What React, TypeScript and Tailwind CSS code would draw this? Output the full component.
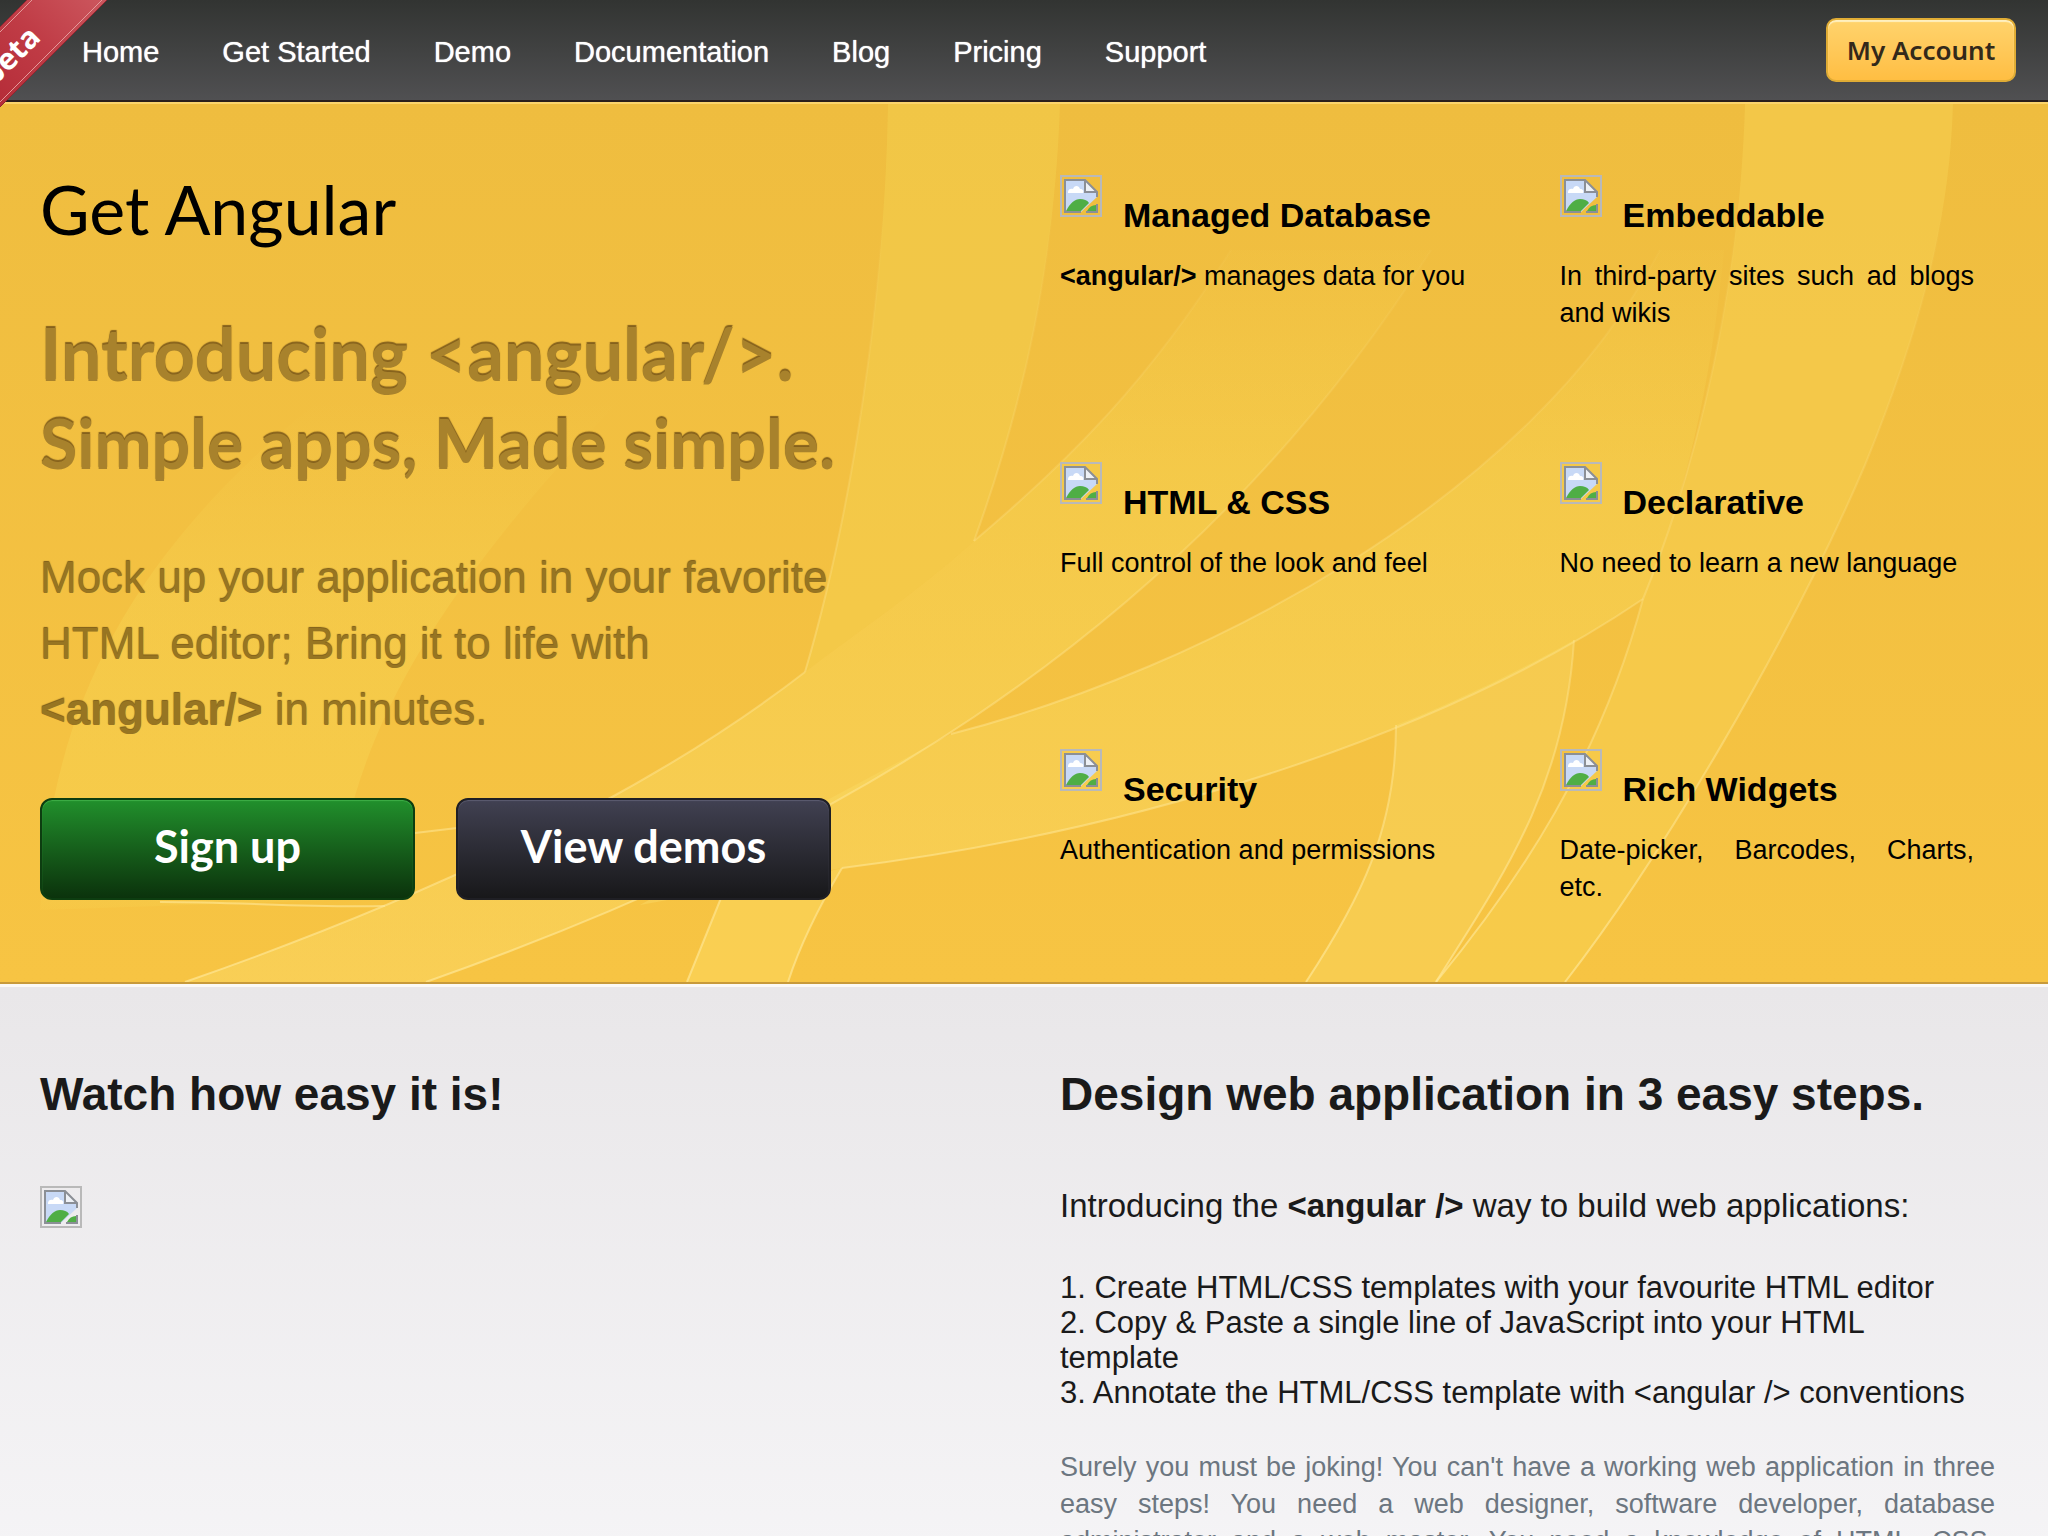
import React from "react";

type Feature = {
  title: string;
  body: React.ReactNode;
};

const navItems = ["Home", "Get Started", "Demo", "Documentation", "Blog", "Pricing", "Support"];

const features: Feature[] = [
  { title: "Managed Database", body: <><b>&lt;angular/&gt;</b> manages data for you</> },
  { title: "Embeddable", body: "In third-party sites such ad blogs and wikis" },
  { title: "HTML & CSS", body: "Full control of the look and feel" },
  { title: "Declarative", body: "No need to learn a new language" },
  { title: "Security", body: "Authentication and permissions" },
  { title: "Rich Widgets", body: "Date-picker, Barcodes, Charts, etc." },
];

const steps = [
  "1. Create HTML/CSS templates with your favourite HTML editor",
  "2. Copy & Paste a single line of JavaScript into your HTML template",
  "3. Annotate the HTML/CSS template with <angular /> conventions",
];

function MissingImage() {
  return (
    <svg viewBox="0 0 42 42" className="size-[42px] shrink-0" aria-hidden="true">
      <rect x="1" y="1" width="40" height="40" fill="none" stroke="#b9b9b9" strokeWidth="2" />
      <path d="M5 5h20l12 12v5L21 37H5z" fill="#c8d9f6" />
      <path d="M8 17c0-3 3-4 5-3 1-4 6-4 7 0 3 0 4 2 3 4H8z" fill="#fff" />
      <path d="M6 36c4-8 9-12 14-12 4 0 7 1 9 4l-8 8z" fill="#4fae45" />
      <path d="M27 36c2-4 5-6 9-6v6z" fill="#4fae45" />
      <path d="M26 6v10h10z" fill="#eef1f6" />
      <path d="M21 37H5V5h20l12 12v5M25 5v12h12M37 29v8H26" fill="none" stroke="#8b8f96" strokeWidth="2" />
    </svg>
  );
}

function BetaRibbon() {
  return (
    <svg viewBox="0 0 108 108" className="absolute top-0 left-0 z-10 size-[108px]">
      <defs>
        <linearGradient id="ribbon" x1="0" y1="1" x2="1" y2="0">
          <stop offset="0" stopColor="#b52c38" />
          <stop offset="0.5" stopColor="#c03c46" />
          <stop offset="1" stopColor="#cc575e" />
        </linearGradient>
      </defs>
      <path d="M27 0h80L0 107V27z" fill="url(#ribbon)" />
      <path d="M27 0 0 27M107 0 0 107" stroke="#8e2630" strokeWidth="1" />
      <path d="M32 0 0 32M102 0 0 102" stroke="#e39a9a" strokeWidth="1" />
      <text x="-6" y="87" transform="rotate(-45 -6 87)" className="fill-white font-['Noto_Sans',sans-serif] text-[30px] font-bold">
        beta
      </text>
    </svg>
  );
}

function HeroSwirls() {
  return (
    <svg viewBox="0 104 2048 878" preserveAspectRatio="none" className="absolute inset-0 h-full w-full" aria-hidden="true">
      <defs>
        <linearGradient id="fade" gradientUnits="userSpaceOnUse" x1="0" y1="200" x2="0" y2="982">
          <stop offset="0" stopColor="#f8da58" stopOpacity="0" />
          <stop offset="0.35" stopColor="#f8da58" stopOpacity="0.35" />
          <stop offset="1" stopColor="#fbd968" stopOpacity="0.5" />
        </linearGradient>
        <linearGradient id="leftFade" gradientUnits="userSpaceOnUse" x1="0" y1="400" x2="0" y2="960">
          <stop offset="0" stopColor="#f8da58" stopOpacity="0" />
          <stop offset="0.35" stopColor="#f8da58" stopOpacity="0.3" />
          <stop offset="0.8" stopColor="#f8da58" stopOpacity="0.35" />
          <stop offset="1" stopColor="#f8da58" stopOpacity="0" />
        </linearGradient>
        <linearGradient id="line" gradientUnits="userSpaceOnUse" x1="0" y1="200" x2="0" y2="982">
          <stop offset="0" stopColor="#ffe795" stopOpacity="0" />
          <stop offset="0.4" stopColor="#ffe795" stopOpacity="0.25" />
          <stop offset="1" stopColor="#ffe795" stopOpacity="0.7" />
        </linearGradient>
      </defs>
      <path d="M40 910C50 720 120 560 320 400L620 400C430 600 350 740 335 900z" fill="url(#leftFade)" />
      <path d="M888 104C885 300 850 520 805 672 860 630 920 590 974 541 1025 400 1055 260 1060 104z" fill="#f5d452" fillOpacity=".4" />
      <path d="M1745 104C1740 280 1700 460 1643 599 1600 760 1520 880 1436 982H1565C1660 860 1790 640 1865 465 1920 330 1950 220 1953 104z" fill="#f7d556" fillOpacity=".42" />
      <path d="M1231 250C1150 380 1070 460 974 541 920 590 860 630 805 672 640 800 420 900 185 982H426C800 850 1180 650 1431 250z" fill="url(#fade)" />
      <path d="M951 734C1200 670 1530 500 1660 250H1724C1710 400 1680 510 1643 599 1450 730 1150 830 842 868L640 905 831 798z" fill="url(#fade)" />
      <path d="M721 898 687 982H788C800 945 820 905 842 868z" fill="#fbd75e" fillOpacity=".6" />
      <path d="M1396 725C1396 830 1360 900 1306 982H1436C1500 880 1565 790 1574 640 1520 670 1460 700 1396 725z" fill="#f8dc6a" fillOpacity=".35" />
      <g fill="none" stroke="url(#line)" strokeWidth="2">
        <path d="M888 104C885 300 850 520 805 672" />
        <path d="M1060 104C1055 260 1025 400 974 541" />
        <path d="M1231 250C1150 380 1070 460 974 541M805 672C640 800 420 900 185 982" />
        <path d="M426 982C800 850 1180 650 1431 250" />
        <path d="M951 734C1200 670 1530 500 1660 250" />
        <path d="M1643 599C1450 730 1150 830 842 868" />
        <path d="M1745 104C1740 280 1700 460 1643 599 1600 760 1520 880 1436 982" />
        <path d="M1565 982C1660 860 1790 640 1865 465 1920 330 1950 220 1953 104" />
        <path d="M1396 725C1396 830 1360 900 1306 982M1574 640C1565 790 1500 880 1436 982" />
        <path d="M721 898 687 982M842 868C820 905 800 945 788 982" />
        <path d="M160 902C240 902 310 908 385 906M415 833 457 828" />
      </g>
    </svg>
  );
}

function HeaderBar() {
  return (
    <header className="relative flex h-[102px] shrink-0 items-center border-b-2 border-[#2a1f1c] bg-linear-to-b from-[#323432] to-[#505052] pr-8 pl-[82px]">
      <BetaRibbon />
      <nav className="flex gap-[63px] pt-1">
        {navItems.map((item) => (
          <a key={item} href="#" className="text-[29px] leading-[44px] text-white [text-shadow:0_0_1px_#fff]">
            {item}
          </a>
        ))}
      </nav>
      <a
        href="#"
        className="ml-auto flex h-16 w-[190px] items-center justify-center rounded-[10px] border-2 border-[#e0ac35] bg-linear-to-b from-[#ffd36c] to-[#ffbe42] font-['Noto_Sans',sans-serif] text-[26px] font-semibold text-[#33291a] shadow-[inset_0_2px_1px_#fff0c0]"
      >
        My Account
      </a>
    </header>
  );
}

function Hero() {
  return (
    <section className="relative shrink-0 border-t-2 border-b-2 border-t-[#fbd46c] border-b-[#c89a3a] bg-linear-to-b from-[#efbd3f] to-[#f7c443]">
      <HeroSwirls />
      <div className="relative grid min-h-[878px] grid-cols-[1020fr_935fr] pr-[53px] pl-10">
        <div>
          <h1 className="mt-[60px] font-[Lato,sans-serif] text-[68px] leading-[90px]">Get Angular</h1>
          <h2 className="mt-[54px] font-[Lato,sans-serif] leading-[90px] font-bold text-[#a8822c] [text-shadow:0_-2px_1px_#85611c]">
            <span className="block text-[72px]">Introducing &lt;angular/&gt;.</span>
            <span className="block text-[68px]">Simple apps, Made simple.</span>
          </h2>
          <p className="mt-[57px] max-w-[800px] text-[44px] leading-[66px] text-[#977522] [text-shadow:0_-1px_1px_#7a5a18]">
            Mock up your application in your favorite HTML editor; Bring it to life with <b>&lt;angular/&gt;</b> in minutes.
          </p>
          <div className="mt-[55px] flex gap-[41px] font-[Lato,sans-serif] text-[45px] font-bold text-white">
            <button className="h-[102px] w-[375px] rounded-[12px] border-2 border-[#0d3d10] bg-linear-to-b from-[#21902c] to-[#0b330c] pb-1 shadow-[inset_0_1px_1px_#3fae48]">
              Sign up
            </button>
            <button className="h-[102px] w-[375px] rounded-[12px] border-2 border-[#1f1f24] bg-linear-to-b from-[#414152] to-[#18181a] pb-1 shadow-[inset_0_1px_1px_#5c5c70]">
              View demos
            </button>
          </div>
        </div>
        <ul className="mt-[71px] grid auto-rows-[156px] grid-cols-2 content-start gap-x-[85px] gap-y-[131px] pr-[21px]">
          {features.map((feature) => (
            <li key={feature.title}>
              <div className="flex gap-[21px]">
                <MissingImage />
                <h3 className="pt-4 text-[34px] leading-[48px] font-bold">{feature.title}</h3>
              </div>
              <p className="mt-[19px] text-justify text-[27px] leading-[37px]">{feature.body}</p>
            </li>
          ))}
        </ul>
      </div>
    </section>
  );
}

function Details() {
  return (
    <section className="grid grow grid-cols-[1020fr_935fr] border-t-3 border-[#fbf9f6] bg-linear-to-b from-[#e9e7e9] to-[#f5f4f6] pt-[73px] pr-[53px] pl-10 text-[#1a1a1a]">
      <div>
        <h2 className="mb-[57px] text-[46px] leading-[69px] font-bold">Watch how easy it is!</h2>
        <MissingImage />
      </div>
      <div>
        <h2 className="text-[46px] leading-[69px] font-bold">Design web application in 3 easy steps.</h2>
        <p className="mt-[55px] text-[33px] leading-[44px]">
          Introducing the <b>&lt;angular /&gt;</b> way to build web applications:
        </p>
        <ul className="mt-[42px] pr-5 text-[31px] leading-[35px]">
          {steps.map((step) => (
            <li key={step}>{step}</li>
          ))}
        </ul>
        <p className="mt-[39px] text-justify text-[27px] leading-[37px] text-[#6c7680] [text-align-last:justify]">
          Surely you must be joking! You can't have a working web application in three easy steps! You need a web
          designer, software developer, database administrator and a web master. You need a knowledge of HTML, CSS,
        </p>
      </div>
    </section>
  );
}

export default function App() {
  return (
    <div className="flex h-screen flex-col overflow-hidden font-['Liberation_Sans',Arial,sans-serif] text-black">
      <HeaderBar />
      <Hero />
      <Details />
    </div>
  );
}
